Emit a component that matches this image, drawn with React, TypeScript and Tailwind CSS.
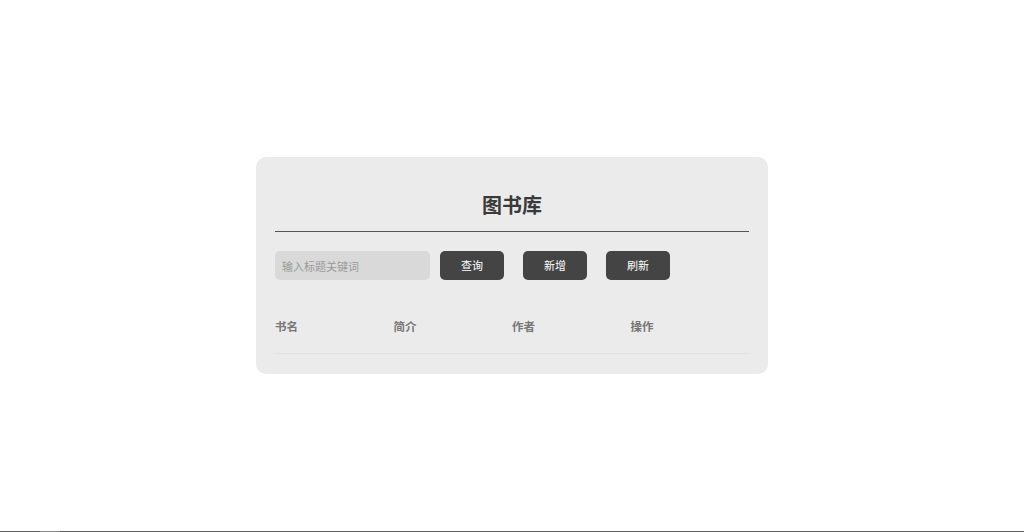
import React from 'react';

const FONT = '"Noto Sans CJK SC", "Noto Sans", "Liberation Sans", sans-serif';

const COLUMNS = ['书名', '简介', '作者', '操作'];
const ACTIONS = ['查询', '新增', '刷新'];

export default function App() {
  return (
    <div className="flex h-[532px] flex-col bg-white" style={{ fontFamily: FONT }}>
      <main className="flex flex-1 items-center justify-center">
        <section className="w-[512px] rounded-[10px] bg-[#ebebeb] px-[19px] pb-[20px] pt-[34px]">
          <h1 className="text-center text-[20px] font-bold leading-[28px] text-[#3a3a3a]">图书库</h1>
          <div className="mt-[12px] h-px bg-[#555]" />

          <div className="mt-[19px] flex items-center">
            <input
              placeholder="输入标题关键词"
              className="h-[29px] w-[155px] rounded-[5px] bg-[#d9d9d9] px-[7px] text-[11px] text-[#555] outline-none placeholder:text-[#9a9a9a]"
            />
            <div className="ml-[10px] flex gap-[19px]">
              {ACTIONS.map((a) => (
                <button
                  key={a}
                  className="h-[29px] w-[64px] rounded-[5px] bg-[#444] text-[11px] text-white"
                >
                  {a}
                </button>
              ))}
            </div>
          </div>

          <div className="mt-[20px] grid grid-cols-4 border-b border-[#e2e2e2] pb-[17px] pt-[16px]">
            {COLUMNS.map((c) => (
              <div key={c} className="text-[11.5px] font-bold leading-[20px] text-[#777]">
                {c}
              </div>
            ))}
          </div>
        </section>
      </main>
      <div className="flex h-px bg-[#5f5f5f]">
        <div className="ml-[40px] w-[20px] bg-[#8a8a8a]" />
      </div>
    </div>
  );
}
